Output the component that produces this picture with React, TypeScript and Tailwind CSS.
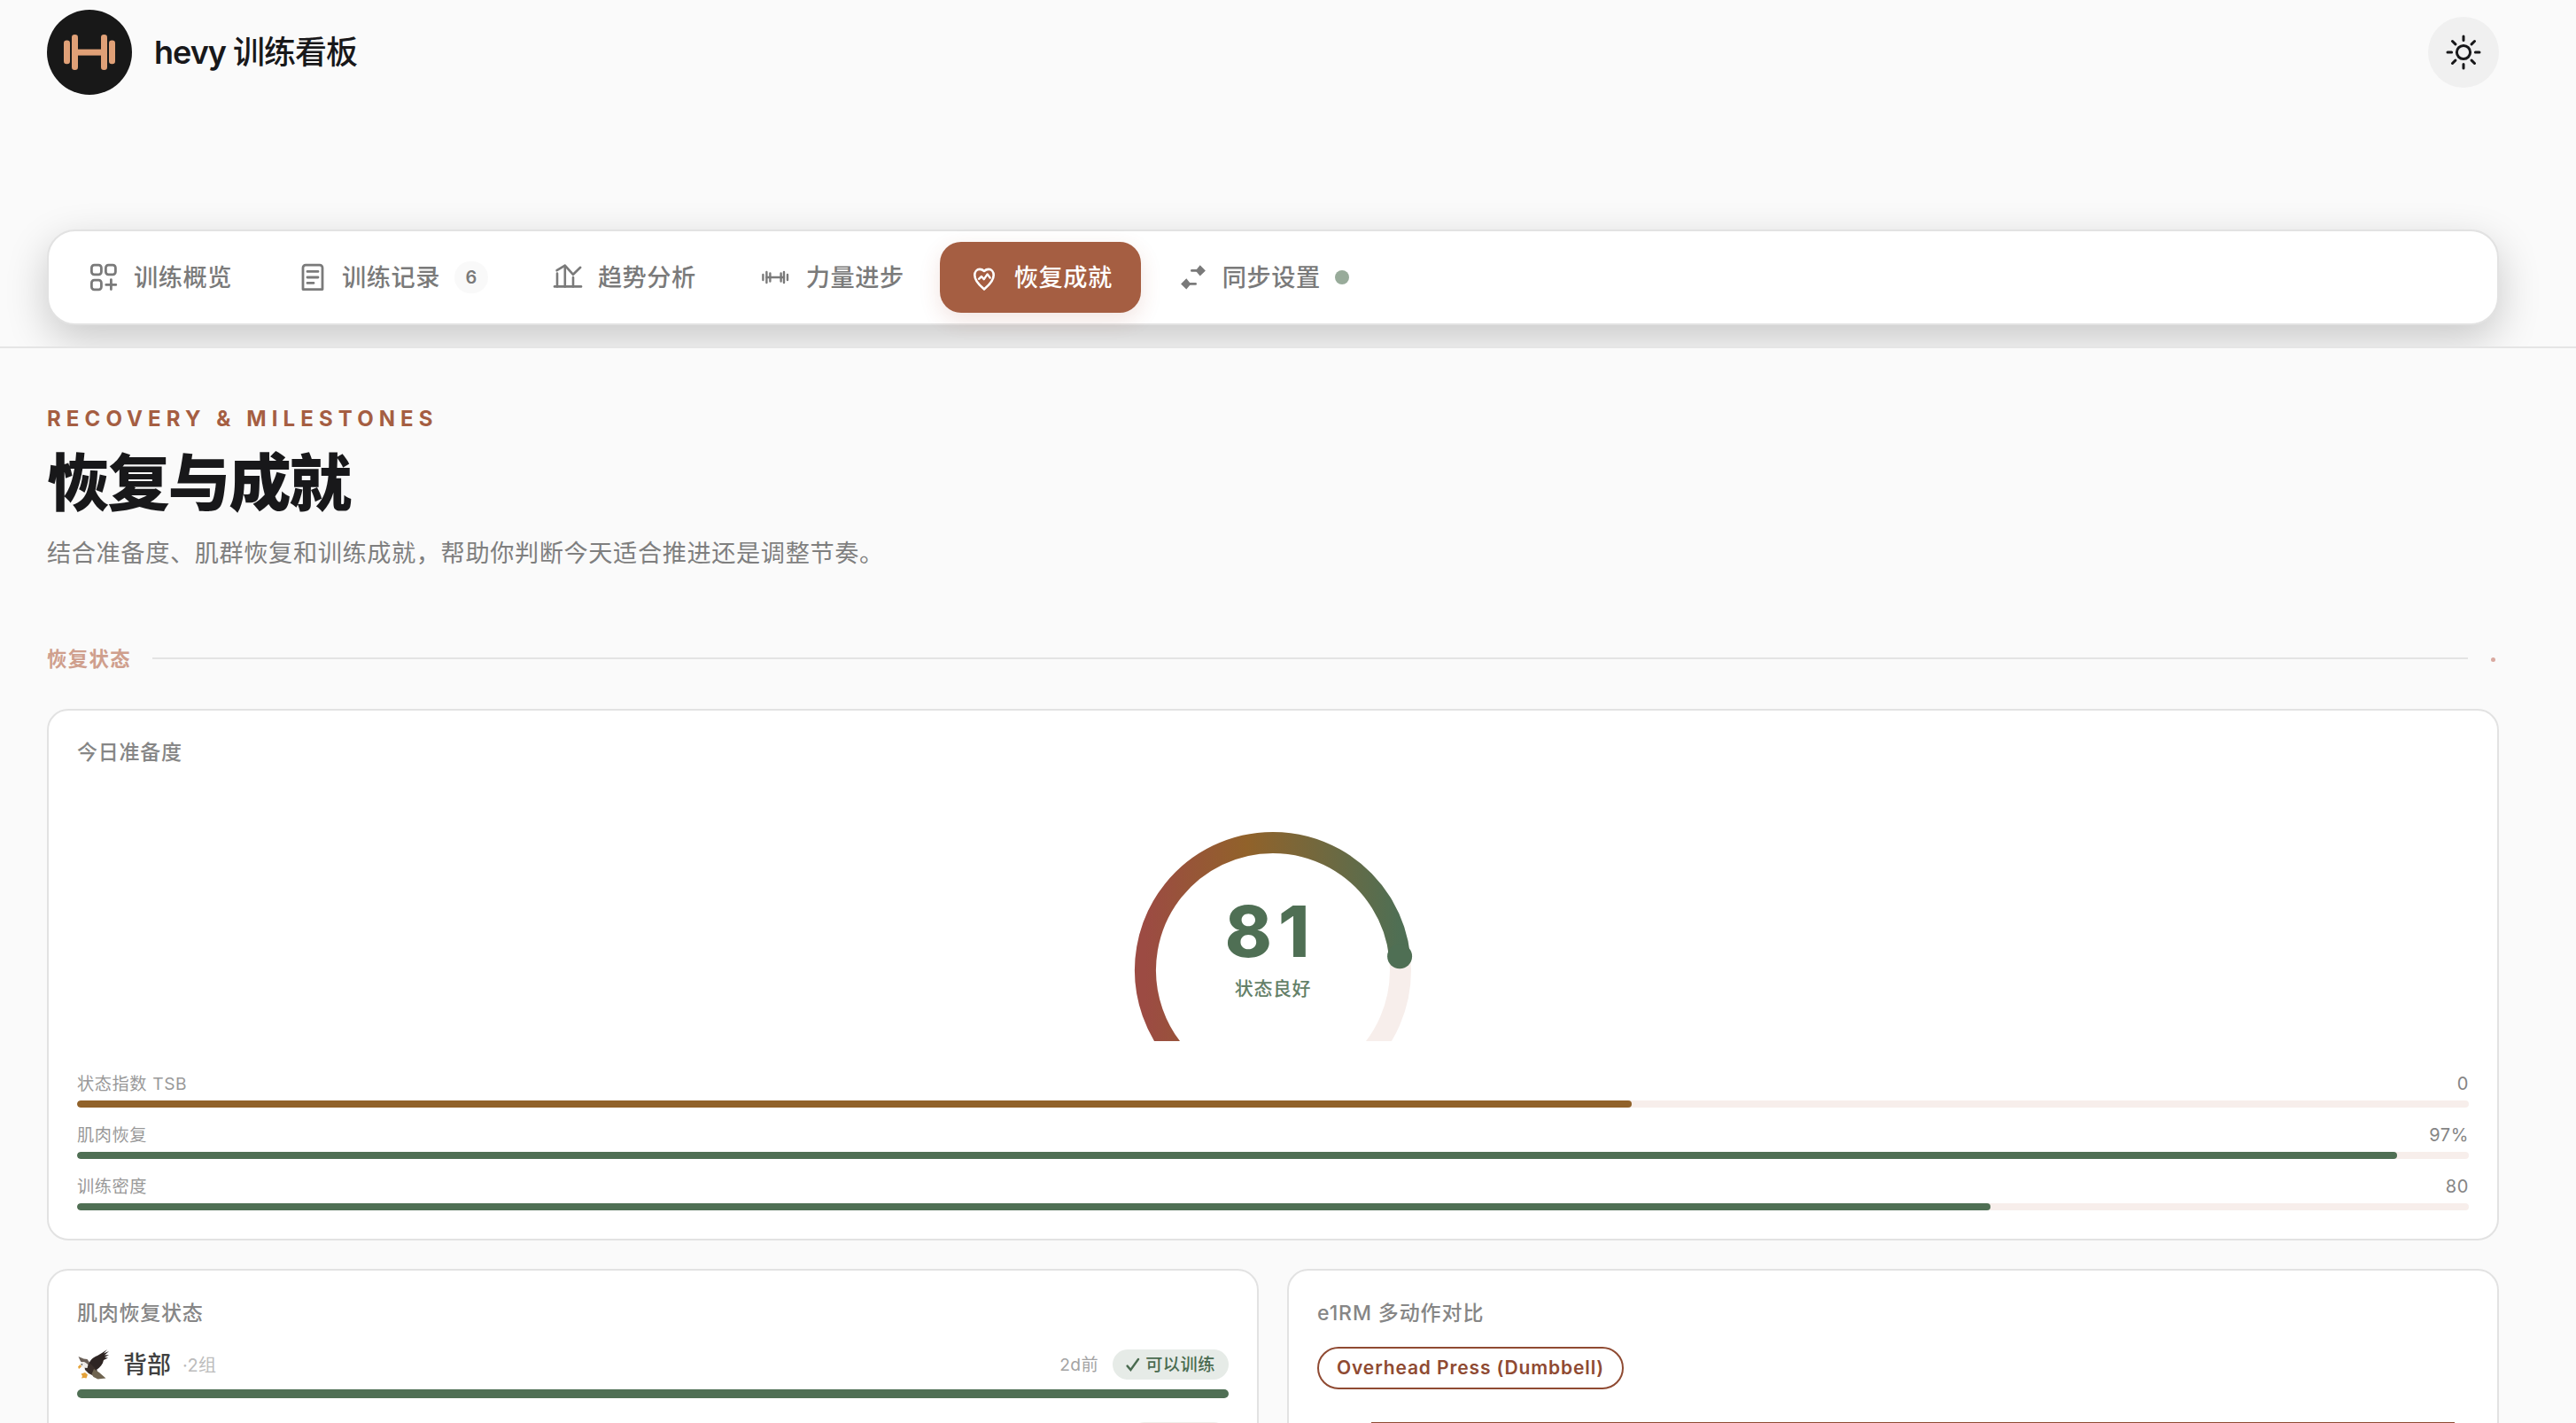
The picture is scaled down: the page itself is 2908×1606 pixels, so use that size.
import type { ReactNode } from "react";

const GridIcon = () => (
  <svg className="w-9 h-9" viewBox="0 0 36 36" fill="none" stroke="currentColor" strokeWidth="2.8" strokeLinecap="round">
    <rect x="4.4" y="4.2" width="11" height="10.6" rx="3" />
    <rect x="20.4" y="4.2" width="11" height="10.6" rx="3" />
    <rect x="4.4" y="21.2" width="11" height="10.6" rx="3" />
    <path d="M26.4 20.6v11M20.8 26.4h11" />
  </svg>
);

const DocIcon = () => (
  <svg className="w-9 h-9" viewBox="0 0 36 36" fill="none" stroke="currentColor" strokeWidth="2.8" strokeLinecap="round" strokeLinejoin="round">
    <path d="M8 31.6V7.2a3 3 0 0 1 3-3h16a3 3 0 0 1 3 3v24.4z" />
    <path d="M13 11.4h12M13 18h12M13 24.4h7" />
  </svg>
);

const TrendIcon = () => (
  <svg className="w-9 h-9" viewBox="0 0 36 36" fill="none" stroke="currentColor" strokeWidth="2.6" strokeLinecap="round" strokeLinejoin="round">
    <path d="M3 28.4h30" />
    <path d="M6 28.4V13.5M14.8 28.4V5M24 28.4V18" />
    <path d="M5.6 10.2l9.2-5.6 9.2 10.2 8.2-8" />
  </svg>
);

const BarbellIcon = () => (
  <svg className="w-9 h-9" viewBox="0 0 36 36" fill="none" stroke="currentColor" strokeWidth="2.4" strokeLinecap="round">
    <path d="M3.4 15v6M7.4 12v12M11.4 13.4v9.2M23.6 13.4v9.2M27 12v12M31 15v6" />
    <path d="M7.4 18h19.6" />
  </svg>
);

const HeartIcon = () => (
  <svg className="w-9 h-9" viewBox="0 0 36 36" fill="none" stroke="currentColor" strokeWidth="2.6" strokeLinecap="round" strokeLinejoin="round">
    <path d="M18 31.4C14 28 7.3 23 7.3 15.6c0-4 2.5-6.7 5.7-6.7 2 0 3.6.8 5 2 1.4-1.2 3-2 5-2 3.2 0 5.7 2.7 5.7 6.7C28.7 23 22 28 18 31.4z" />
    <path strokeWidth="2.4" d="M12 19.8l3-2.8 2.8 3.2 3.9-5.8 3 4.2" />
  </svg>
);

const SyncIcon = () => (
  <svg className="w-9 h-9" viewBox="0 0 36 36" fill="none" stroke="currentColor" strokeWidth="2.8" strokeLinecap="round">
    <path d="M17.4 10.4h9M11.4 25.4h10.2" />
    <path fill="currentColor" stroke="none" d="M26.7 4.2l6.2 6.2-6.2 6.2-5-6.2zM11.3 19.2l5 6.2-5 6.2-6.2-6.2z" />
  </svg>
);

const EagleIcon = () => (
  <svg className="w-[37px] h-[36px]" viewBox="0 0 37 36">
    <path fill="#6b6058" d="M1.5 9l6 2.5 4 .5 3.5 5-2 4-5-4-4-2.5z" />
    <path fill="#2e2523" d="M13 19c1-6 5-9 10-11l5-3 6-4-4 4.5L36 3l-5 4.5 5-.5-5 3 4 .5-5 2.500c-1 5-4 8-8 11l-7 1z" />
    <path fill="#3b302b" d="M8 18l7-1 8 8-4 6-6-3-4-4z" />
    <path fill="#6f6450" d="M19 23l6 4 7.5 6.5-5 .5-4 .5-5-2.5-2-3z" />
    <path fill="#efece8" d="M3 18c0-2.5 3-3.5 6-2.5l3.5 2.5-1 4-4.5-.5-3-1z" />
    <path fill="#e5a33a" d="M3.5 18l-2.5 2.5 1 2.500 3-2.500zM4.5 28.5l4.5-1.5 3 2.5-1.5 4-2.5-.5-3 .5 1-2.5z" />
    <circle cx="5.4" cy="18" r=".8" fill="#222" />
  </svg>
);

const navItems: { name: string; icon: ReactNode; count?: number; active?: boolean; dot?: boolean }[] = [
  { name: "训练概览", icon: <GridIcon /> },
  { name: "训练记录", icon: <DocIcon />, count: 6 },
  { name: "趋势分析", icon: <TrendIcon /> },
  { name: "力量进步", icon: <BarbellIcon /> },
  { name: "恢复成就", icon: <HeartIcon />, active: true },
  { name: "同步设置", icon: <SyncIcon />, dot: true },
];

const metrics = [
  { name: "状态指数 TSB", value: "0", percent: 65, color: "bg-[#91622a]" },
  { name: "肌肉恢复", value: "97%", percent: 97, color: "bg-[#4f6f54]" },
  { name: "训练密度", value: "80", percent: 80, color: "bg-[#4f6f54]" },
];

const Header = () => (
  <header className="h-[393px] border-b-2 border-[#e5e5e5] overflow-hidden pt-[11px] pl-[53px] pr-[87px]">
    <div className="flex items-center justify-between">
      <div className="flex items-center gap-[25px]">
        <svg className="w-24 h-24" viewBox="0 0 96 96">
          <circle cx="48" cy="48" r="48" fill="#181818" />
          <g fill="#e0a077">
            <rect x="19" y="34.6" width="7" height="26.6" rx="3.3" />
            <rect x="28" y="28" width="7" height="40" rx="3.3" />
            <rect x="61" y="28" width="7" height="40" rx="3.3" />
            <rect x="70" y="34.6" width="7" height="26.6" rx="3.3" />
            <rect x="32" y="44.6" width="32" height="7" />
          </g>
        </svg>
        <span className="text-[36px] leading-[48px] font-semibold tracking-[-1px] text-[#18181a]">
          hevy <span className="font-medium">训练看板</span>
        </span>
      </div>
      <button className="w-20 h-20 rounded-full bg-[#f0f0f0]">
        <svg className="w-20 h-20" viewBox="0 0 80 80" fill="none" stroke="#18181a" strokeWidth="3" strokeLinecap="round">
          <circle cx="40" cy="40" r="7.6" />
          <path d="M40 22v4.6M40 53.4V58M22 40h4.6M53.4 40H58M27.5 27.5l3.4 3.4M49.1 49.1l3.4 3.4M27.5 52.5l3.4-3.4M49.1 30.9l3.4-3.4" />
        </svg>
      </button>
    </div>
    <nav className="mt-[152px] h-[108px] flex items-center gap-2 p-3 bg-white border-2 border-[#e2e2e2] rounded-[32px] shadow-[0_16px_48px_rgba(0,0,0,0.2)]">
      {navItems.map((item, idx) => (
        <a
          key={idx}
          className={
            item.active
              ? "h-20 px-8 flex items-center gap-4 rounded-3xl bg-[#a55e42] text-white shadow-[0_8px_24px_rgba(165,66,40,0.14)]"
              : "h-20 px-8 flex items-center gap-4 rounded-3xl text-[#7a7a7a]"
          }
        >
          {item.icon}
          <span className="pt-0.5 text-[27.2px] leading-9 font-medium tracking-[0.544px]">{item.name}</span>
          {item.count && (
            <span className="w-[38px] h-9 flex items-center justify-center rounded-full bg-[#f9f9f9] text-[20px] font-semibold">
              {item.count}
            </span>
          )}
          {item.dot && <span className="w-4 h-4 rounded-full bg-[#98ab9a]" />}
        </a>
      ))}
    </nav>
  </header>
);

const Gauge = () => (
  <svg className="mx-auto mt-[37px] w-[360px] h-[275px]" viewBox="0 0 360 275">
    <defs>
      <linearGradient id="ready" gradientUnits="userSpaceOnUse" x1="36" y1="0" x2="323" y2="0">
        <stop offset="0" stopColor="#9c4b43" />
        <stop offset=".4" stopColor="#91622a" />
        <stop offset="1" stopColor="#4f6f54" />
      </linearGradient>
    </defs>
    <path d="M78.2 296.8A144 144 0 1 1 281.8 296.8" fill="none" stroke="#f7eeeb" strokeWidth="24" />
    <path d="M78.2 296.8A144 144 0 1 1 323.1 179.2" fill="none" stroke="url(#ready)" strokeWidth="24" />
    <circle cx="323.1" cy="179.3" r="14" fill="#4f6f54" />
    <text x="177" y="180" textAnchor="middle" fill="#4f6f54" className="text-[80px] font-extrabold tracking-[7px]">
      81
    </text>
    <text x="180" y="222.5" textAnchor="middle" fill="#4f6f54" opacity=".88" className="text-[21px] font-medium tracking-[0.6px]">
      状态良好
    </text>
  </svg>
);

const App = () => {
  return (
    <div className='w-[2908px] h-[1606px] overflow-hidden bg-[#fafafa] font-[Inter,"Noto_Sans_CJK_SC",sans-serif]'>
      <Header />
      <main className="w-[2821px] pl-[53px] pt-16">
        <p className="text-[24px] leading-8 font-bold tracking-[6.1px] text-[#a55e42]">RECOVERY &amp; MILESTONES</p>
        <h1 className="mt-[15px] text-[70.4px] leading-[84px] font-extrabold tracking-[-2px] text-[#18181a]">恢复与成就</h1>
        <p className="mt-[15px] text-[27.2px] leading-[44px] tracking-[0.6px] text-[#7f7f7f]">
          结合准备度、肌群恢复和训练成就，帮助你判断今天适合推进还是调整节奏。
        </p>

        <div className="mt-[77px] h-10 flex items-center text-[#cf9f8d]">
          <span className="text-[22.4px] font-semibold tracking-[1.34px]">恢复状态</span>
          <span className="ml-6 mr-[26px] mb-0.5 h-0.5 flex-1 bg-[#e3e3e3]" />
          <span className="mr-1 w-[5px] h-[5px] rounded-full bg-[#d9a9a0]" />
        </div>

        <section className="mt-9 h-[600px] bg-white border-2 border-[#e2e2e2] rounded-3xl p-8">
          <h2 className="pt-px text-[23px] leading-7 font-medium tracking-[0.75px] text-[#868686]">今日准备度</h2>
          <Gauge />
          <div className="mt-[34px] flex flex-col gap-[17px]">
            {metrics.map((m, idx) => (
              <div key={idx}>
                <div className="flex justify-between text-[19.2px] leading-7 tracking-[0.6px]">
                  <span className="text-[#999999]">{m.name}</span>
                  <span className="text-[20px] text-[#858585]">{m.value}</span>
                </div>
                <div className="mt-[5px] h-2 rounded-full bg-[#f7eeeb] overflow-hidden">
                  <div className={`h-2 rounded-full ${m.color}`} style={{ width: `${m.percent}%` }} />
                </div>
              </div>
            ))}
          </div>
        </section>

        <div className="mt-8 grid grid-cols-2 gap-8">
          <section className="h-[400px] bg-white border-2 border-[#e2e2e2] rounded-3xl p-8">
            <h2 className="text-[23px] leading-8 font-medium tracking-[0.75px] text-[#868686]">肌肉恢复状态</h2>
            <div className="mt-[25px] h-[34px] flex items-center">
              <EagleIcon />
              <span className="ml-[15px] pt-0.5 text-[27px] leading-8 font-medium text-[#404040]">背部</span>
              <span className="ml-[13px] pt-0.5 text-[20px] tracking-[0.4px] text-[#bcbcbc]">·2组</span>
              <span className="ml-auto text-[19.2px] tracking-[0.4px] text-[#a3a3a3]">2d前</span>
              <span className="ml-4 w-[131px] h-[34px] flex items-center justify-center gap-1.5 rounded-full bg-[#e6ebe7] text-[#4a6b50] text-[19.2px] font-medium tracking-[0.5px]">
                <svg className="w-4 h-4" viewBox="0 0 16 16" fill="none" stroke="currentColor" strokeWidth="2.4" strokeLinecap="round">
                  <path d="M1.6 9.6l3.8 4.4L14 2" />
                </svg>
                可以训练
              </span>
            </div>
            <div className="mt-[11px] h-2.5 rounded-full bg-[#4f6f54]" />
            <div className="mt-[27px] flex justify-end">
              <span className="w-[112px] h-[34px] rounded-full bg-[#f0ece8]" />
            </div>
          </section>

          <section className="h-[400px] bg-white border-2 border-[#e2e2e2] rounded-3xl p-8">
            <h2 className="text-[23px] leading-8 font-medium tracking-[0.9px] text-[#868686]">e1RM 多动作对比</h2>
            <button className="mt-[22px] block h-12 px-5 border-2 border-[#8f4a32] rounded-full text-[21px] font-semibold tracking-[0.88px] text-[#8f4a32]">
              Overhead Press (Dumbbell)
            </button>
            <div className="mt-[37px] ml-[61px] mr-4 h-[200px] border-t-2 border-[#8f4a32]" />
          </section>
        </div>
      </main>
    </div>
  );
};

export default App;
